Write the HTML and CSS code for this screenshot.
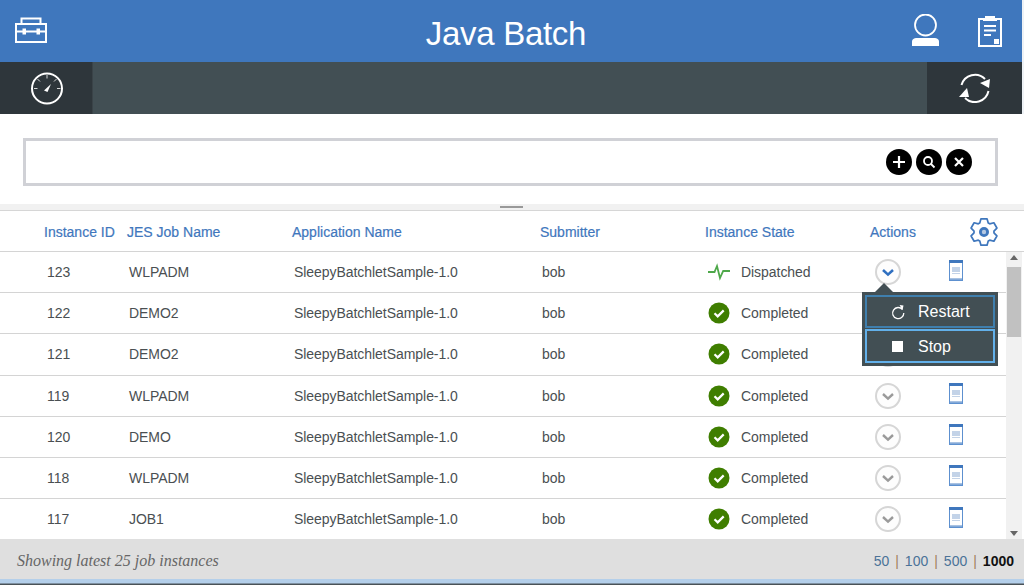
FILE: index.html
```html
<!DOCTYPE html>
<html lang="en">
<head>
<meta charset="utf-8">
<title>Java Batch</title>
<link rel="stylesheet" href="styles.css">
</head>
<body>
<svg class="defs" width="0" height="0" aria-hidden="true">
  <symbol id="doc" viewBox="0 0 14 21">
    <rect x="0" y="0" width="14" height="21" fill="#5d90cf"/>
    <rect x="0" y="0" width="14" height="3" fill="#3f77bd"/>
    <rect x="1" y="3" width="12" height="15" fill="#fff"/>
    <rect x="3" y="7" width="8" height="5" fill="#c3d3e8"/>
    <rect x="3" y="13" width="8" height="1" fill="#c3d3e8"/>
    <rect x="1" y="18" width="12" height="1.500" fill="#a9c2e2"/>
  </symbol>
  <symbol id="check" viewBox="0 0 22 22">
    <circle cx="11" cy="11" r="10.500" fill="#3f7e00"/>
    <path d="M6.500 11.300l3.200 3.100 6-6" fill="none" stroke="#fff" stroke-width="2.200"/>
  </symbol>
  <symbol id="chev" viewBox="0 0 26 26">
    <circle cx="13" cy="13" r="12" fill="#fdfdfd" stroke="#d6d6d6" stroke-width="2"/>
    <path d="M8 11l5 4.600 5-4.600" fill="none" stroke="#9a9a9a" stroke-width="2.400"/>
  </symbol>
</svg>

<header class="topbar">
  <svg class="tool" width="33" height="27" viewBox="0 0 33 27" fill="none" stroke="#fff" stroke-width="2">
    <rect x="1" y="7" width="30" height="18"/>
    <path d="M6.500 7V1.500h19V7M1 14.500h30"/>
    <rect x="8" y="12" width="2.500" height="5" fill="#fff" stroke-width="1"/>
    <rect x="22" y="12" width="2.500" height="5" fill="#fff" stroke-width="1"/>
  </svg>
  <h1 class="title">Java Batch</h1>
  <div class="top-right">
    <svg width="28" height="33" viewBox="0 0 28 33">
      <circle cx="13.500" cy="11" r="10.500" fill="none" stroke="#fff" stroke-width="1.800"/>
      <path d="M0 32v-4c0-3 2-4 5-4h17c3 0 5 1 5 4v4z" fill="#fff"/>
    </svg>
    <svg width="24" height="32" viewBox="0 0 24 32">
      <rect x="1" y="4" width="22" height="27" fill="none" stroke="#fff" stroke-width="2"/>
      <path d="M7 1h10v2h2v3H5V3h2z" fill="#fff"/>
      <path d="M6 11h12M6 15.500h12M6 20h7" stroke="#fff" stroke-width="2"/>
      <path d="M16 24h5v5h-5z" fill="#fff"/>
    </svg>
  </div>
</header>

<nav class="subbar">
  <div class="sub-btn sub-left">
    <svg width="32" height="33" viewBox="0 0 32 33" fill="none" stroke="#fff">
      <circle cx="16" cy="16.500" r="15" stroke-width="2"/>
      <path d="M16 3v3.500M3 16.500h3.500M26 16.500h3.500M6.500 7l2.500 2.500M25.500 7L23 9.500" stroke-width="1" opacity=".8"/>
      <path d="M13 18.500l7-6.500-3.500 8z" fill="#fff" stroke="none"/>
    </svg>
  </div>
  <div class="sub-btn sub-right">
    <svg width="32" height="30" viewBox="0 0 32 30" fill="none" stroke="#fff" stroke-width="2">
      <path d="M2.500 12A14 14 0 0 1 26 6"/>
      <path d="M6 25A14 14 0 0 0 29.500 18"/>
      <path d="M31 6l-1 9-9-5z" fill="#fff" stroke="none"/>
      <path d="M0 24l8-9 2 9z" fill="#fff" stroke="none"/>
    </svg>
  </div>
</nav>

<section class="search">
  <div class="search-box">
    <span class="round"><svg width="14" height="14" viewBox="0 0 14 14"><path d="M7 1v12M1 7h12" stroke="#fff" stroke-width="2.200"/></svg></span>
    <span class="round"><svg width="14" height="14" viewBox="0 0 14 14" fill="none" stroke="#fff" stroke-width="1.800"><circle cx="6" cy="6" r="4"/><path d="M9 9l3.500 3.500"/></svg></span>
    <span class="round"><svg width="12" height="12" viewBox="0 0 12 12"><path d="M2 2l8 8M10 2l-8 8" stroke="#fff" stroke-width="2.200"/></svg></span>
  </div>
</section>

<div class="splitter"><span class="grip"></span></div>

<main class="grid-wrap">
  <div class="row head">
    <span>Instance ID</span><span>JES Job Name</span><span>Application Name</span><span>Submitter</span><span>Instance State</span><span>Actions</span>
    <svg class="gear" width="28" height="28" viewBox="0 0 28 28" fill="none" stroke="#3f77bd" stroke-width="1.700">
      <path stroke-linejoin="round" d="M9.770 4.940L10.960 .85H17.040L18.230 4.940L19.740 5.810L23.870 4.790L26.910 10.050L23.960 13.130V14.870L26.910 17.950L23.870 23.210L19.740 22.190L18.230 23.060L17.040 27.150H10.960L9.770 23.060L8.260 22.190L4.130 23.210L1.090 17.950L4.040 14.870V13.130L1.090 10.050L4.130 4.790L8.260 5.810Z"/>
      <circle cx="14" cy="14" r="3.600" fill="#b5c8e2" stroke-width="2.800"/>
    </svg>
  </div>
  <div class="body">
    <div class="rows">
      <div class="row">
        <span>123</span><span>WLPADM</span><span>SleepyBatchletSample-1.0</span><span>bob</span>
        <span class="state">
          <svg class="state-ico" width="22" height="22" viewBox="0 0 22 22" fill="none" stroke="#4ea84a" stroke-width="1.800"><path d="M0 11h6.500l2.500-6 3 12 3.200-7H22"/></svg>
          Dispatched
        </span>
        <span class="act">
          <svg width="26" height="26" viewBox="0 0 26 26"><circle cx="13" cy="13" r="12" fill="#fdfdfd" stroke="#d6d6d6" stroke-width="2"/><path d="M8 11l5 4.600 5-4.600" fill="none" stroke="#2f6fc0" stroke-width="2.600"/></svg>
        </span>
        <svg class="doc"><use href="#doc"/></svg>
      </div>
      <div class="row"><span>122</span><span>DEMO2</span><span>SleepyBatchletSample-1.0</span><span>bob</span><span class="state"><svg class="state-ico"><use href="#check"/></svg>Completed</span><span class="act"><svg class="chev"><use href="#chev"/></svg></span><svg class="doc"><use href="#doc"/></svg></div>
      <div class="row"><span>121</span><span>DEMO2</span><span>SleepyBatchletSample-1.0</span><span>bob</span><span class="state"><svg class="state-ico"><use href="#check"/></svg>Completed</span><span class="act"><svg class="chev"><use href="#chev"/></svg></span><svg class="doc"><use href="#doc"/></svg></div>
      <div class="row"><span>119</span><span>WLPADM</span><span>SleepyBatchletSample-1.0</span><span>bob</span><span class="state"><svg class="state-ico"><use href="#check"/></svg>Completed</span><span class="act"><svg class="chev"><use href="#chev"/></svg></span><svg class="doc"><use href="#doc"/></svg></div>
      <div class="row"><span>120</span><span>DEMO</span><span>SleepyBatchletSample-1.0</span><span>bob</span><span class="state"><svg class="state-ico"><use href="#check"/></svg>Completed</span><span class="act"><svg class="chev"><use href="#chev"/></svg></span><svg class="doc"><use href="#doc"/></svg></div>
      <div class="row"><span>118</span><span>WLPADM</span><span>SleepyBatchletSample-1.0</span><span>bob</span><span class="state"><svg class="state-ico"><use href="#check"/></svg>Completed</span><span class="act"><svg class="chev"><use href="#chev"/></svg></span><svg class="doc"><use href="#doc"/></svg></div>
      <div class="row last"><span>117</span><span>JOB1</span><span>SleepyBatchletSample-1.0</span><span>bob</span><span class="state"><svg class="state-ico"><use href="#check"/></svg>Completed</span><span class="act"><svg class="chev"><use href="#chev"/></svg></span><svg class="doc"><use href="#doc"/></svg></div>
    </div>
    <div class="scroll">
      <span class="arrow up"></span>
      <span class="thumb"></span>
      <span class="arrow down"></span>
    </div>
    <div class="menu">
      <span class="menu-tip"></span>
      <button class="menu-btn" type="button">
        <svg width="14" height="16" viewBox="0 0 14 16" fill="none" stroke="#fff" stroke-width="1.300"><path d="M11.500 5.500A5.600 5.600 0 1 0 12.800 9"/><path d="M8.500 1l4 .5L11.500 6z" fill="#fff" stroke="none"/></svg>
        <span>Restart</span>
      </button>
      <button class="menu-btn" type="button">
        <span class="stop-ico"></span>
        <span>Stop</span>
      </button>
    </div>
  </div>
</main>

<footer class="foot">
  <em class="count">Showing latest 25 job instances</em>
  <div class="pager"><a>50</a><i>|</i><a>100</a><i>|</i><a>500</a><i>|</i><b>1000</b></div>
</footer>
<div class="bottom-strip"></div>
</body>
</html>
```
FILE: styles.css
```css
* { box-sizing: border-box; }
html, body { margin: 0; height: 100%; }
body {
  width: 1024px;
  height: 585px;
  overflow: hidden;
  background: #fff;
  font-family: "Liberation Sans", Arial, sans-serif;
  color: #4a4f52;
  display: flex;
  flex-direction: column;
}
.defs { position: absolute; }

.topbar {
  height: 62px;
  background: #3f77bd;
  color: #fff;
  display: flex;
  align-items: center;
  padding: 2px 20px 0 15px;
  border-right: 2px solid #eef2f6;
}
.tool { flex: none; margin-top: -3px; }
.title {
  flex: 1;
  margin: 0 0 -3px;
  padding-left: 52px;
  text-align: center;
  font-weight: 400;
  font-size: 33px;
  letter-spacing: -.3px;
}
.top-right { display: flex; align-items: center; gap: 38px; margin-top: -3px; }

.subbar {
  height: 52px;
  background: #424f54;
  display: flex;
  justify-content: space-between;
  border-right: 2px solid #eef2f6;
}
.sub-btn {
  background: #2e363b;
  display: flex;
  align-items: center;
  justify-content: center;
}
.sub-left { width: 93px; padding-left: 2px; border-right: 1px solid #3a4348; }
.sub-right { width: 95px; }

.search { height: 90px; padding: 24px 26px 0 23px; }
.search-box {
  height: 48px;
  border: 3px solid #d0d1d6;
  display: flex;
  justify-content: flex-end;
  align-items: center;
  gap: 4px;
  padding-right: 23px;
}
.round {
  width: 26px;
  height: 26px;
  border-radius: 50%;
  background: #000;
  display: flex;
  align-items: center;
  justify-content: center;
}

.splitter {
  height: 7px;
  background: #f1f1f1;
  border-bottom: 1px solid #d6d6d6;
  display: flex;
  justify-content: center;
  padding-right: 2px;
}
.grip { width: 23px; height: 2px; margin-top: 2px; background: #999; }

.grid-wrap { flex: 1; display: flex; flex-direction: column; min-height: 0; }
.row {
  display: grid;
  grid-template-columns: 82px 165px 248px 166px 165px 77px 1fr;
  align-items: center;
  height: 41.200px;
  padding: 0 0 .2px 47px;
  font-size: 14px;
  letter-spacing: -.05px;
  border-bottom: 1px solid #d4d4d4;
}
.row.last { border-bottom-color: transparent; }
.head {
  grid-template-columns: 83px 165px 248px 165px 165px 77px 1fr;
  height: 41px;
  padding: 2px 0 0 44px;
  color: #3f77bd;
  letter-spacing: 0;
  -webkit-text-stroke: .2px #3f77bd;
  flex: none;
}
.gear { margin-left: 23px; }
.body { position: relative; display: flex; flex: 1; min-height: 0; }
.rows { flex: 1; min-width: 0; overflow: hidden; }
.state { display: flex; align-items: center; gap: 11px; }
.state-ico { width: 22px; height: 22px; flex: none; }
.act { display: flex; margin-left: 2px; }
.chev { width: 26px; height: 26px; }
.doc { width: 14px; height: 21px; margin-left: -1px; margin-top: -4px; }

.scroll {
  width: 18px;
  background: #f1f1f1;
  border-right: 2px solid #fff;
  display: flex;
  flex-direction: column;
  align-items: center;
  position: relative;
}
.thumb { width: 14px; height: 70px; background: #c1c1c1; margin-top: 15px; }
.arrow { width: 0; height: 0; border: 4px solid transparent; position: absolute; }
.up { top: 3px; border-bottom: 5px solid #666; border-top: 0; }
.down { bottom: 3px; border-top: 5px solid #666; border-bottom: 0; }

.menu {
  position: absolute;
  left: 862px;
  top: 40px;
  width: 136px;
  height: 74px;
  background: #424f54;
  padding: 3px;
  display: flex;
  flex-direction: column;
  gap: 1px;
}
.menu-tip {
  position: absolute;
  left: 13px;
  top: -9px;
  width: 0;
  height: 0;
  border-left: 9px solid transparent;
  border-right: 9px solid transparent;
  border-bottom: 9px solid #424f54;
}
.menu-btn {
  flex: 1;
  display: flex;
  align-items: center;
  gap: 13px;
  padding: 0 0 0 24px;
  background: #424f54;
  border: 2px solid #3f7fae;
  color: #fff;
  font: 16px "Liberation Sans", Arial, sans-serif;
}
.menu-btn:last-child { border-color: #62b0ea; padding-top: 1px; }
.stop-ico { width: 11px; height: 11px; background: #fff; margin: 0 2px 0 1px; }

.foot {
  height: 40px;
  background: #dfdfdf;
  display: flex;
  align-items: center;
  justify-content: space-between;
  padding: 3px 10px 0 17px;
  flex: none;
}
.count {
  font-family: "Liberation Serif", serif;
  font-size: 16px;
  color: #666;
}
.pager { font-size: 14px; color: #4b7298; display: flex; gap: 6px; }
.pager i { font-style: normal; color: #a08060; }
.pager b { color: #111; }
.bottom-strip {
  height: 6px;
  flex: none;
  background: linear-gradient(#b4cfea 0, #b4cfea 4px, #4a5257 5px);
}
```
